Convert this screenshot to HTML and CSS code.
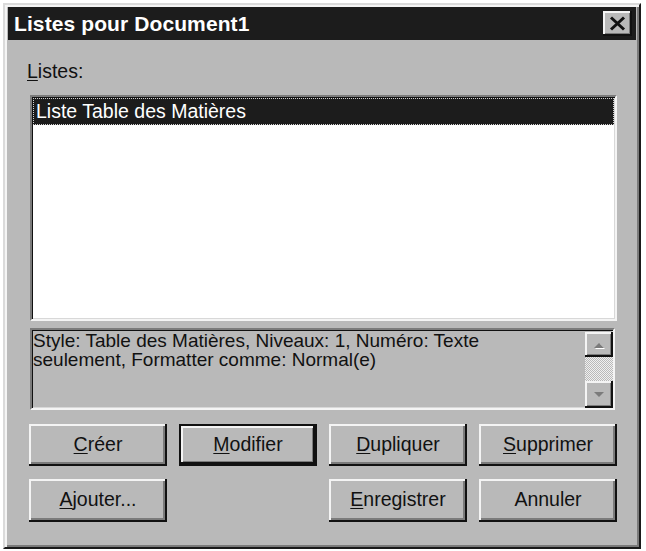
FILE: index.html
```html
<!DOCTYPE html>
<html lang="fr">
<head>
<meta charset="utf-8">
<title>Listes pour Document1</title>
<link rel="stylesheet" href="styles.css">
</head>
<body>
<div class="window">
  <div class="titlebar">
    <span class="title">Listes pour Document1</span>
    <div class="close">
      <svg width="17" height="15" viewBox="0 0 17 15"><path d="M2 1.5 L15 13.5 M15 1.5 L2 13.5" stroke="#111" stroke-width="3" fill="none"/></svg>
    </div>
  </div>
  <div class="content">
    <div class="label"><u>L</u>istes:</div>
    <div class="listbox">
      <div class="item selected">Liste Table des Matières</div>
    </div>
    <div class="desc">
      <div class="desc-text">Style: Table des Matières, Niveaux: 1, Numéro: Texte<br>seulement, Formatter comme: Normal(e)</div>
      <div class="scrollbar">
        <div class="sb-btn sb-up">
          <svg width="14" height="8" viewBox="0 0 14 8"><path d="M2 7 L12 7 L7 2 Z" fill="#fff" transform="translate(1,1)"/><path d="M2 7 L12 7 L7 2 Z" fill="#7b7b7b"/></svg>
        </div>
        <div class="sb-track"></div>
        <div class="sb-btn sb-down">
          <svg width="14" height="8" viewBox="0 0 14 8"><path d="M2 1 L12 1 L7 6 Z" fill="#7b7b7b"/></svg>
        </div>
      </div>
    </div>
    <div class="buttons">
      <div class="btn"><u>C</u>réer</div>
      <div class="btn default"><u>M</u>odifier</div>
      <div class="btn"><u>D</u>upliquer</div>
      <div class="btn"><u>S</u>upprimer</div>
      <div class="btn"><u>A</u>jouter...</div>
      <div class="btn hidden"></div>
      <div class="btn"><u>E</u>nregistrer</div>
      <div class="btn">Annuler</div>
    </div>
  </div>
</div>
</body>
</html>
```
FILE: styles.css
```css
html, body {
  margin: 0;
  padding: 0;
  background: #ffffff;
}
body {
  font-family: "Liberation Sans", Arial, sans-serif;
  font-size: 19.5px;
  color: #111;
}
.window {
  margin: 3px 0 0 3px;
  width: 638px;
  height: 546px;
  box-sizing: border-box;
  background: #b9b9b9;
  border: 2px solid;
  border-color: #dadada #1a1a1a #1a1a1a #dadada;
  box-shadow: inset 2px 2px #f4f4f4, inset -2px -2px #7b7b7b;
  padding: 2px 3px 0 3px;
  display: flex;
  flex-direction: column;
}
.titlebar {
  height: 33px;
  background: #1c1c1c;
  display: flex;
  align-items: center;
  justify-content: space-between;
  padding: 0 4px 0 6px;
}
.title {
  color: #fff;
  font-weight: bold;
  font-size: 21px;
  line-height: 33px;
  letter-spacing: 0.1px;
}
.close {
  width: 29px;
  height: 25px;
  box-sizing: border-box;
  background: #b9b9b9;
  box-shadow: inset -2px -2px #111, inset 2px 2px #f4f4f4, inset -3px -3px #7b7b7b;
  display: flex;
  align-items: center;
  justify-content: center;
  padding: 0 1px 1px 0;
}
.content {
  padding: 0 20px 0 22px;
  display: flex;
  flex-direction: column;
}
.label {
  margin: 20px 0 13px -3px;
  line-height: 22px;
}
u {
  text-decoration: underline;
  text-underline-offset: 2px;
}
.listbox {
  width: 587px;
  height: 226px;
  box-sizing: border-box;
  background: #fff;
  border: 2px solid;
  border-color: #7b7b7b #f4f4f4 #f4f4f4 #7b7b7b;
  box-shadow: inset 1px 1px #111, inset -1px -1px #d8d8d8;
  padding: 1px;
}
.item {
  height: 27px;
  line-height: 25px;
  box-sizing: border-box;
  padding: 0 2px;
}
.item.selected {
  background: #1c1c1c;
  color: #fff;
  border: 1px dotted #d0d0d0;
}
.desc {
  margin-top: 7px;
  width: 585px;
  height: 82px;
  box-sizing: border-box;
  border: 2px solid;
  border-color: #7b7b7b #f4f4f4 #f4f4f4 #7b7b7b;
  box-shadow: inset 1px 1px #111, inset -1px -1px #d8d8d8;
  display: flex;
  justify-content: space-between;
}
.desc-text {
  padding: 1px 0 0 1px;
  font-size: 19px;
  line-height: 19px;
}
.scrollbar {
  width: 28px;
  display: flex;
  flex-direction: column;
  padding-top: 2px;
}
.sb-btn {
  height: 25px;
  box-sizing: border-box;
  background: #b9b9b9;
  box-shadow: inset -2px -2px #111, inset 2px 2px #f4f4f4, inset -3px -3px #7b7b7b;
  display: flex;
  align-items: center;
  justify-content: center;
}
.sb-down {
  height: 27px;
}
.sb-track {
  flex: 1;
  background-color: #b9b9b9;
  background-image: repeating-conic-gradient(#f0f0f0 0 25%, #b9b9b9 0 50%);
  background-size: 2px 2px;
}
.buttons {
  margin: 14px 0 0 -1px;
  display: grid;
  grid-template-columns: repeat(4, 138px);
  grid-template-rows: 42px 43px;
  column-gap: 12px;
  row-gap: 13px;
}
.btn {
  box-sizing: border-box;
  background: #b9b9b9;
  box-shadow: inset -2px -2px #111, inset 2px 2px #f4f4f4, inset -4px -4px #7b7b7b;
  display: flex;
  align-items: center;
  justify-content: center;
  padding-bottom: 2px;
}
.btn.default {
  border: 2px solid #111;
  box-shadow: inset -2px -2px #111, inset 2px 2px #f4f4f4, inset -3px -3px #7b7b7b;
}
.btn.hidden {
  visibility: hidden;
}
```
